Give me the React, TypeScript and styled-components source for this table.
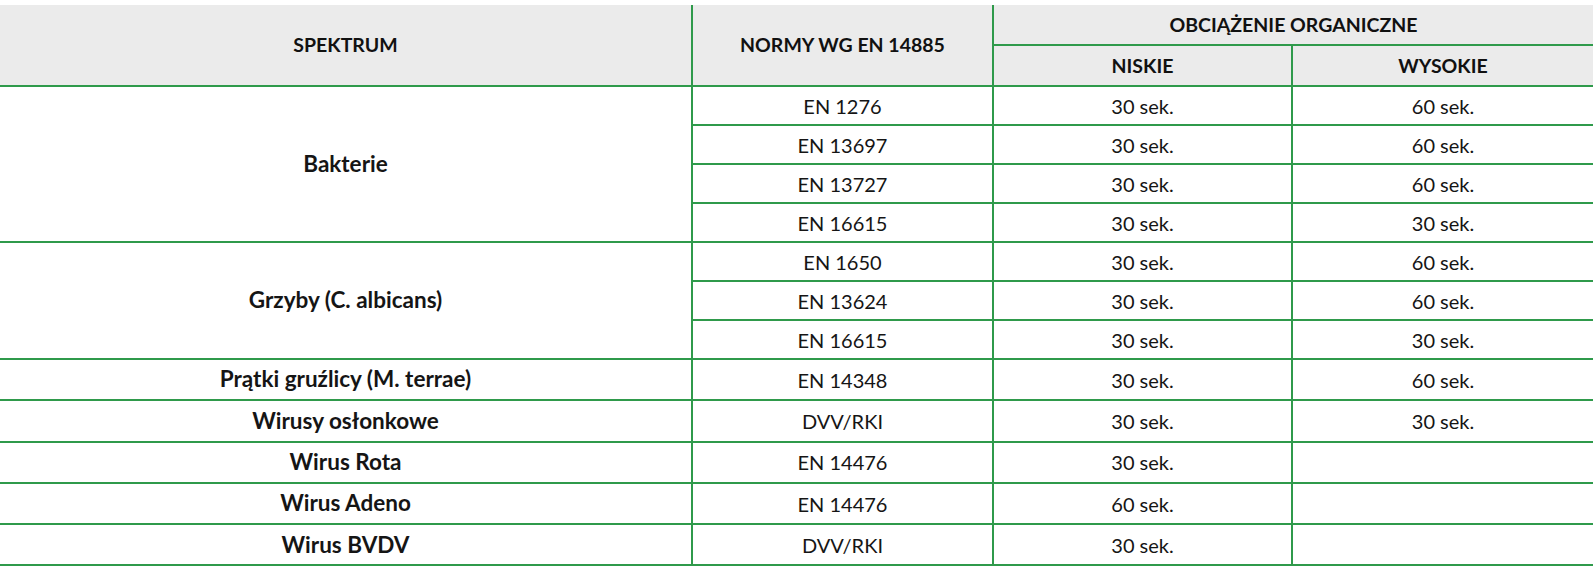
import styled, { createGlobalStyle } from "styled-components";

const GlobalStyle = createGlobalStyle`
  html, body {
    margin: 0;
    padding: 0;
    background: #ffffff;
  }
  body {
    font-family: Lato, "Open Sans", "Liberation Sans", sans-serif;
    color: #111111;
  }
`;

const GREEN = "#2f9a4b";

const Page = styled.div`
  padding-top: 5px;
  width: 1593px;
`;

const Table = styled.table`
  width: 1593px;
  border-collapse: collapse;
  table-layout: fixed;
  font-size: 19.5px;
  line-height: 1;
`;

const HeadCell = styled.th`
  background: #ebebeb;
  font-size: 19.5px;
  font-weight: 700;
  text-transform: uppercase;
  color: #111111;
  text-align: center;
  vertical-align: middle;
  padding: 0;
  border: 2px solid ${GREEN};
  border-top: none;
  &:first-child {
    border-left: none;
  }
  &:last-child {
    border-right: none;
  }
`;

const HeadRow = styled.tr<{ $h: number }>`
  height: ${(p) => p.$h}px;
`;

const BodyRow = styled.tr<{ $h: number }>`
  height: ${(p) => p.$h}px;
`;

const Cell = styled.td<{ $bold?: boolean }>`
  text-align: center;
  vertical-align: middle;
  padding: 0;
  font-size: ${(p) => (p.$bold ? 22.5 : 20)}px;
  font-weight: ${(p) => (p.$bold ? 700 : 400)};
  color: #151515;
  border: 2px solid ${GREEN};
  &:first-child {
    border-left: none;
  }
  &:last-child {
    border-right: none;
  }
`;

type Row = {
  norm: string;
  low: string;
  high: string;
};

type Group = {
  name: string;
  rows: Row[];
};

const groups: Group[] = [
  {
    name: "Bakterie",
    rows: [
      { norm: "EN 1276", low: "30 sek.", high: "60 sek." },
      { norm: "EN 13697", low: "30 sek.", high: "60 sek." },
      { norm: "EN 13727", low: "30 sek.", high: "60 sek." },
      { norm: "EN 16615", low: "30 sek.", high: "30 sek." },
    ],
  },
  {
    name: "Grzyby (C. albicans)",
    rows: [
      { norm: "EN 1650", low: "30 sek.", high: "60 sek." },
      { norm: "EN 13624", low: "30 sek.", high: "60 sek." },
      { norm: "EN 16615", low: "30 sek.", high: "30 sek." },
    ],
  },
  {
    name: "Prątki gruźlicy (M. terrae)",
    rows: [{ norm: "EN 14348", low: "30 sek.", high: "60 sek." }],
  },
  {
    name: "Wirusy osłonkowe",
    rows: [{ norm: "DVV/RKI", low: "30 sek.", high: "30 sek." }],
  },
  {
    name: "Wirus Rota",
    rows: [{ norm: "EN 14476", low: "30 sek.", high: "" }],
  },
  {
    name: "Wirus Adeno",
    rows: [{ norm: "EN 14476", low: "60 sek.", high: "" }],
  },
  {
    name: "Wirus BVDV",
    rows: [{ norm: "DVV/RKI", low: "30 sek.", high: "" }],
  },
];

const App = () => {
  let index = 0;
  return (
    <Page>
      <GlobalStyle />
      <Table>
        <colgroup>
          <col style={{ width: 692 }} />
          <col style={{ width: 301 }} />
          <col style={{ width: 299 }} />
          <col style={{ width: 301 }} />
        </colgroup>
        <thead>
          <HeadRow $h={40}>
            <HeadCell rowSpan={2}>Spektrum</HeadCell>
            <HeadCell rowSpan={2}>Normy wg EN 14885</HeadCell>
            <HeadCell colSpan={2}>Obciążenie organiczne</HeadCell>
          </HeadRow>
          <HeadRow $h={41}>
            <HeadCell>Niskie</HeadCell>
            <HeadCell>Wysokie</HeadCell>
          </HeadRow>
        </thead>
        <tbody>
          {groups.map((group) =>
            group.rows.map((row, i) => {
              const h = index < 7 ? 39 : 41.3;
              index += 1;
              return (
                <BodyRow key={group.name + i} $h={h}>
                  {i === 0 && (
                    <Cell $bold rowSpan={group.rows.length}>
                      {group.name}
                    </Cell>
                  )}
                  <Cell>{row.norm}</Cell>
                  <Cell>{row.low}</Cell>
                  <Cell>{row.high}</Cell>
                </BodyRow>
              );
            })
          )}
        </tbody>
      </Table>
    </Page>
  );
};

export default App;
